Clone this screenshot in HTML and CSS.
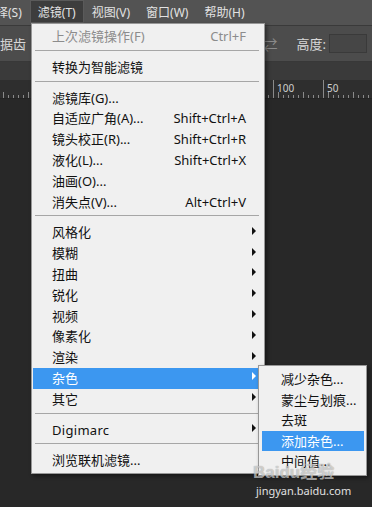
FILE: index.html
```html
<!DOCTYPE html>
<html lang="zh-CN">
<head>
    <meta charset="UTF-8">
    <meta name="viewport" content="width=device-width, initial-scale=1.0">
    <title>滤镜菜单</title>
    <link rel="stylesheet" href="styles.css">
</head>
<body>
    <div class="app">
        <div class="menubar">
            <span class="mb-item first">择(S)</span>
            <span class="mb-item active">滤镜(T)</span>
            <span class="mb-item">视图(V)</span>
            <span class="mb-item">窗口(W)</span>
            <span class="mb-item">帮助(H)</span>
        </div>

        <div class="optionsbar">
            <span class="opt-text">据齿</span>
            <div class="opt-right">
                <span class="swap">⇄</span>
                <span class="opt-text">高度:</span>
                <span class="opt-input"></span>
            </div>
        </div>

        <div class="tabbar"></div>

        <div class="ruler">
            <span class="ruler-mark mark-100">100</span>
            <span class="ruler-mark mark-50">50</span>
        </div>

        <div class="canvas"></div>
    </div>

    <!-- filter dropdown -->
    <div class="menu">
        <div class="item disabled"><span>上次滤镜操作(F)</span><span class="key">Ctrl+F</span></div>
        <div class="sep"></div>
        <div class="item"><span>转换为智能滤镜</span></div>
        <div class="sep"></div>
        <div class="item"><span>滤镜库(G)...</span></div>
        <div class="item"><span>自适应广角(A)...</span><span class="key">Shift+Ctrl+A</span></div>
        <div class="item"><span>镜头校正(R)...</span><span class="key">Shift+Ctrl+R</span></div>
        <div class="item"><span>液化(L)...</span><span class="key">Shift+Ctrl+X</span></div>
        <div class="item"><span>油画(O)...</span></div>
        <div class="item"><span>消失点(V)...</span><span class="key">Alt+Ctrl+V</span></div>
        <div class="sep"></div>
        <div class="item"><span>风格化</span><span class="arrow"></span></div>
        <div class="item"><span>模糊</span><span class="arrow"></span></div>
        <div class="item"><span>扭曲</span><span class="arrow"></span></div>
        <div class="item"><span>锐化</span><span class="arrow"></span></div>
        <div class="item"><span>视频</span><span class="arrow"></span></div>
        <div class="item"><span>像素化</span><span class="arrow"></span></div>
        <div class="item"><span>渲染</span><span class="arrow"></span></div>
        <div class="item selected"><span>杂色</span><span class="arrow"></span></div>
        <div class="item"><span>其它</span><span class="arrow"></span></div>
        <div class="sep"></div>
        <div class="item latin"><span>Digimarc</span><span class="arrow"></span></div>
        <div class="sep"></div>
        <div class="item"><span>浏览联机滤镜...</span></div>
    </div>

    <!-- noise submenu -->
    <div class="submenu">
        <div class="item"><span>减少杂色...</span></div>
        <div class="item"><span>蒙尘与划痕...</span></div>
        <div class="item"><span>去斑</span></div>
        <div class="item selected"><span>添加杂色...</span></div>
        <div class="item"><span>中间值...</span></div>
    </div>

    <div class="watermark">
        <div class="wm-logo">Baidu经验</div>
        <div class="wm-url">jingyan.baidu.com</div>
    </div>
</body>
</html>
```

FILE: styles.css
```css
/* General Styles */
body {
    margin: 0;
    width: 372px;
    height: 507px;
    overflow: hidden;
    background-color: #282828;
    font-family: "Noto Sans", "Noto Sans CJK SC", sans-serif;
    font-size: 13px;
    position: relative;
}

.app {
    display: flex;
    flex-direction: column;
    height: 100%;
}

/* Top menu bar */
.menubar {
    display: flex;
    height: 26px;
    background-color: #535353;
    color: #e2e2e2;
    font-size: 12px;
    border-bottom: 1px solid #3a3a3a;
    box-sizing: border-box;
}

.mb-item {
    padding: 2px 8px 0;
    line-height: 21px;
    height: 23px;
    box-sizing: border-box;
    white-space: nowrap;
}

.mb-item.first {
    margin-left: -12px;
}

.mb-item.active {
    background-color: #3d3d3d;
    box-shadow: inset 0 0 0 1px #5a5a5a;
}

/* Options bar */
.optionsbar {
    display: flex;
    align-items: center;
    height: 36px;
    background-color: #4c4c4c;
    color: #d8d8d8;
    border-bottom: 1px solid #383838;
    box-sizing: border-box;
}

.opt-right {
    display: flex;
    align-items: center;
    margin-left: auto;
    padding-right: 5px;
}

.swap {
    color: #8a8a8a;
    font-size: 14px;
    margin-right: 19px;
}

.opt-input {
    width: 38px;
    height: 19px;
    margin-left: 3px;
    background-color: #464646;
    border: 1px solid #3a3a3a;
    box-sizing: border-box;
}

.tabbar {
    height: 18px;
    background-color: #3a3a3a;
}

/* Ruler */
.ruler {
    position: relative;
    height: 18px;
    background-color: #2e2e2e;
    background-image:
        repeating-linear-gradient(to right, #8a8a8a 0 1px, transparent 1px 5px),
        repeating-linear-gradient(to right, #8a8a8a 0 1px, transparent 1px 25px);
    background-size: 100% 3px, 100% 6px;
    background-position: 3px 100%, 3px 100%;
    background-repeat: no-repeat;
    border-bottom: 1px solid #232323;
}

.ruler-mark {
    position: absolute;
    top: 0;
    height: 18px;
    padding-left: 3px;
    border-left: 1px solid #8a8a8a;
    color: #cfcfcf;
    font-size: 10px;
    line-height: 17px;
}

.mark-100 { left: 273px; }
.mark-50 { left: 323px; }

.canvas {
    flex: 1;
    background-color: #282828;
}

/* Dropdown menus */
.menu,
.submenu {
    position: absolute;
    background-color: #f0f0f0;
    border: 1px solid #979797;
    box-shadow: 2px 2px 4px rgba(0, 0, 0, 0.45);
    color: #111;
    box-sizing: border-box;
}

.menu {
    left: 31px;
    top: 23px;
    width: 234px;
    padding: 2px 5px 2px 1px;
}

.menu .item {
    display: flex;
    align-items: center;
    height: 20.8px;
    line-height: 20.8px;
    padding-left: 19px;
    padding-right: 13px;
    white-space: nowrap;
}

.item.disabled {
    color: #8c8c8c;
}

.item.latin {
    letter-spacing: 0.3px;
}

.key {
    margin-left: auto;
}

.arrow {
    margin-left: auto;
    margin-right: -10px;
    margin-bottom: 4px;
    width: 0;
    height: 0;
    border-left: 4px solid #111;
    border-top: 4px solid transparent;
    border-bottom: 4px solid transparent;
}

.item.selected {
    background-color: #3c97f0;
    color: #fff;
}

.item.selected .arrow {
    border-left-color: #fff;
}

.sep {
    height: 1px;
    margin: 3px 0 6px 2px;
    background-color: #a6a6a6;
}

.submenu {
    left: 258px;
    top: 365px;
    width: 109px;
    padding: 3px 2px 3px 3px;
}

.submenu .item {
    height: 20.5px;
    line-height: 20.5px;
    padding-left: 19px;
    white-space: nowrap;
}

/* Watermark */
.watermark {
    position: absolute;
    left: 253px;
    top: 463px;
}

.wm-logo {
    font-family: "Liberation Sans", "Noto Sans CJK SC", sans-serif;
    font-weight: bold;
    font-size: 17px;
    line-height: 20px;
    color: rgba(235, 235, 235, 0.65);
    text-shadow: 0 0 1px rgba(0, 0, 0, 0.4);
}

.wm-url {
    font-family: "Noto Sans", sans-serif;
    font-size: 11px;
    line-height: 14px;
    margin-top: 1px;
    margin-left: 3px;
    color: #e0e0e0;
}
```
